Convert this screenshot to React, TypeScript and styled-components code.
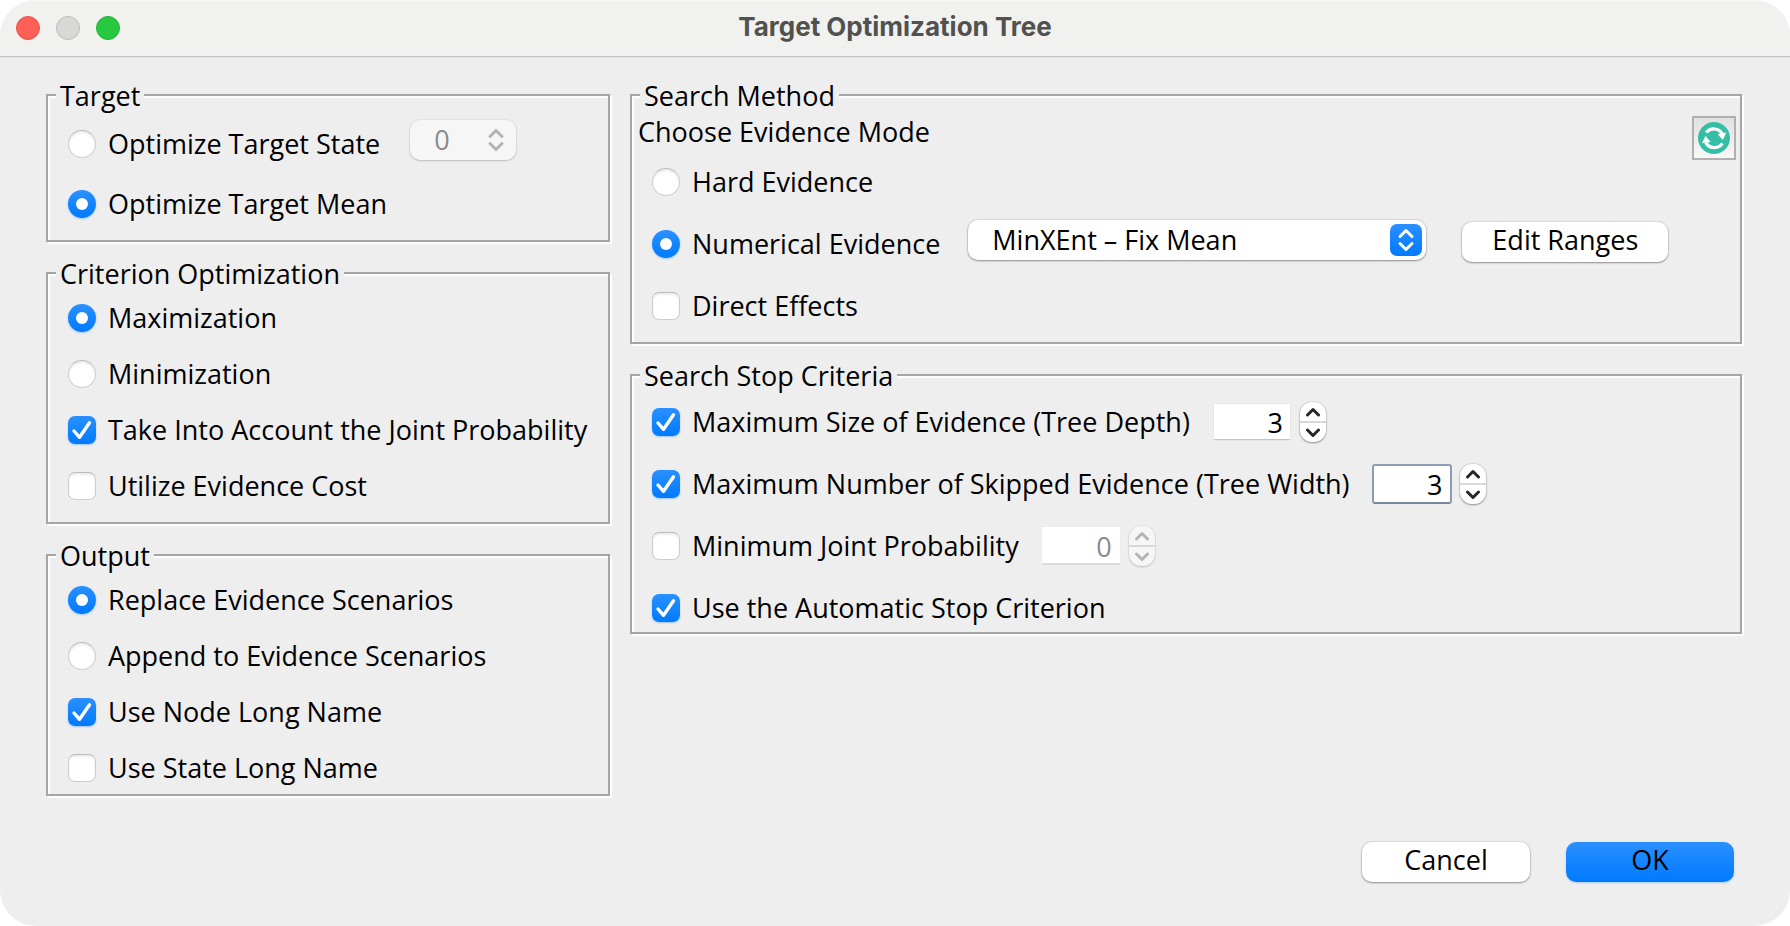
import React, { useState } from "react";
import styled, { createGlobalStyle, css } from "styled-components";

const colors = {
  panel: "#eeeeee",
  line: "#a5a5a5",
  accentTop: "#2a90ff",
  accentBottom: "#007aff",
  disabled: "#8a8a8a",
};

const GlobalStyle = createGlobalStyle`
  *, *::before, *::after { box-sizing: border-box; }
  body {
    margin: 0;
    background: #ffffff;
    color: #000000;
    font-family: "Open Sans", "Noto Sans", sans-serif;
    font-size: 27px;
    line-height: 32px;
  }
  button, input, select { font: inherit; color: inherit; margin: 0; }
`;

const accent = css`
  background: linear-gradient(${colors.accentTop}, ${colors.accentBottom});
`;

const raised = css`
  background: #ffffff;
  box-shadow: 0 0 1px 1px rgba(0, 0, 0, 0.08), 0 1px 2px rgba(0, 0, 0, 0.35);
`;

const Window = styled.div`
  display: flex;
  flex-direction: column;
  min-height: 100vh;
  overflow: hidden;
  border-radius: 36px;
  background: ${colors.panel};
`;

const TitleBar = styled.header`
  display: grid;
  grid-template-columns: 1fr auto 1fr;
  align-items: center;
  height: 58px;
  padding: 0 16px 2px;
  border-top: 1px solid #f7f7f6;
  border-bottom: 1px solid #dfdfdf;
  box-shadow: inset 0 -1px 0 #c6c6c6;
  background: #f1f1ef;
`;

const Title = styled.h1`
  margin: 0;
  padding-bottom: 2px;
  font-family: Inter, sans-serif;
  font-size: 26px;
  font-weight: 700;
  line-height: 32px;
  color: #51514f;
`;

const Lights = styled.div`
  display: flex;
  gap: 16px;
`;

const Light = styled.button<{ $fill: string; $edge: string }>`
  width: 24px;
  height: 24px;
  padding: 0;
  border: 1px solid ${(p) => p.$edge};
  border-radius: 50%;
  background: ${(p) => p.$fill};
`;

const Panels = styled.main`
  display: grid;
  grid-template-columns: 564px 1fr;
  align-items: start;
  column-gap: 20px;
  padding: 21px 48px 0 46px;
`;

const Column = styled.div`
  display: flex;
  flex-direction: column;
  gap: 15px;
  min-width: 0;
`;

const Group = styled.fieldset`
  min-width: 0;
  margin: 0;
  padding: 0;
  border: 2px solid ${colors.line};
  box-shadow: 2px 2px 0 #ffffff, inset 2px 2px 0 #ffffff;
`;

const GroupTitle = styled.legend`
  height: 32px;
  margin-left: 8px;
  padding: 2px 4px 0;
  line-height: 30px;
  background: ${colors.panel};
`;

const Options = styled.div<{ $gap: number; $top: number; $bottom: number }>`
  display: flex;
  flex-direction: column;
  align-items: flex-start;
  gap: ${(p) => p.$gap}px;
  padding: ${(p) => p.$top}px 20px ${(p) => p.$bottom}px;
`;

const OptionLabel = styled.label`
  display: flex;
  align-items: center;
  gap: 12px;
  height: 28px;
  white-space: nowrap;
`;

const Mark = styled.span`
  display: grid;
  width: 28px;
  height: 28px;

  & > * { grid-area: 1 / 1; }
  svg { display: none; pointer-events: none; }
  input:checked + svg { display: block; }
`;

const Toggle = styled.input`
  appearance: none;
  width: 28px;
  height: 28px;
  border: 1px solid #cdcdcd;
  border-top-color: #bcbcbc;
  border-radius: ${(p) => (p.type === "radio" ? "50%" : "7px")};
  background: #ffffff;
  box-shadow: inset 0 2px 2px rgba(0, 0, 0, 0.08);

  &:checked {
    ${accent}
    border: 0;
    box-shadow: 0 1px 2px rgba(0, 122, 255, 0.35);
  }
`;

const ControlRow = styled.div<{ $gap: number; $raise?: boolean }>`
  display: flex;
  align-items: ${(p) => (p.$raise ? "flex-end" : "center")};
  gap: ${(p) => p.$gap}px;
  height: 28px;
`;

const Controls = styled.div`
  display: flex;
  align-items: baseline;
  gap: 36px;
  height: 38px;
`;

const SelectBox = styled.span<{ $width: number }>`
  display: inline-grid;
  align-items: center;
  width: ${(p) => p.$width}px;
  height: 40px;

  & > * { grid-area: 1 / 1; }
`;

const Select = styled.select`
  appearance: none;
  width: 100%;
  height: 40px;
  padding: 0 40px 0 24px;
  border: 0;
  border-radius: 10px;
  ${raised}

  &:disabled {
    background: #f6f6f6;
    color: ${colors.disabled};
    opacity: 1;
    box-shadow: 0 0 1px 1px rgba(0, 0, 0, 0.04), 0 1px 2px rgba(0, 0, 0, 0.18);
  }
`;

const SelectArrows = styled.span<{ $active?: boolean }>`
  display: grid;
  place-items: center;
  justify-self: end;
  width: 32px;
  height: 32px;
  margin-right: 4px;
  border-radius: 7px;
  pointer-events: none;
  color: ${(p) => (p.$active ? "#ffffff" : "#b4b4b4")};
  ${(p) => p.$active && accent}
`;

const PushButton = styled.button<{ $width: number; $primary?: boolean }>`
  width: ${(p) => p.$width}px;
  height: 40px;
  padding: 0 0 4px;
  border: 0;
  border-radius: 10px;
  white-space: nowrap;
  ${raised}
  ${(p) =>
    p.$primary &&
    css`
      ${accent}
      box-shadow: 0 1px 2px rgba(0, 122, 255, 0.3);
    `}
`;

const MethodHead = styled.div`
  display: flex;
  align-items: flex-start;
  justify-content: space-between;
  padding: 5px 4px 0 6px;
`;

const Caption = styled.p`
  margin: 0;
`;

const RefreshButton = styled.button`
  display: grid;
  place-items: center;
  width: 44px;
  height: 44px;
  padding: 0;
  border: 2px solid #b0b0b0;
  background: linear-gradient(#e0e0e0, #f8f8f8);
`;

const SpinnerBox = styled.span`
  display: flex;
  align-items: center;
  gap: 8px;
`;

const SpinnerInput = styled.input<{ $focused?: boolean }>`
  width: 80px;
  height: 40px;
  padding: 0 8px 0 0;
  border: 1px solid ${colors.panel};
  background: #ffffff;
  background-clip: padding-box;
  text-align: right;
  outline: 0;
  box-shadow: inset 0 0 0 1px #e6e6e6, inset 0 -2px 0 #c4c4c4;
  ${(p) =>
    p.$focused &&
    css`
      border: 2px solid #8c9cb4;
      border-bottom-color: #76889e;
      border-radius: 3px;
      padding-right: 7px;
      box-shadow: none;
    `}

  &:disabled {
    color: ${colors.disabled};
    box-shadow: inset 0 -2px 0 #dcdcdc;
  }
`;

const Stepper = styled.span<{ $off?: boolean }>`
  display: flex;
  flex-direction: column;
  width: 26px;
  height: 40px;
  overflow: hidden;
  border-radius: 12px;
  color: #262626;
  ${raised}
  ${(p) =>
    p.$off &&
    css`
      color: #b4b4b4;
      background: #f6f6f6;
      box-shadow: 0 0 1px 1px rgba(0, 0, 0, 0.04), 0 1px 2px rgba(0, 0, 0, 0.18);
    `}
`;

const StepButton = styled.button`
  display: grid;
  place-items: center;
  flex: 1;
  padding: 0;
  border: 0;
  background: transparent;

  & + & { border-top: 2px solid #d8d8d8; }
`;

const Footer = styled.footer`
  display: flex;
  justify-content: flex-end;
  gap: 36px;
  margin-top: auto;
  padding: 24px 56px 44px;
`;

const RadioDot = () => (
  <svg width="28" height="28" viewBox="0 0 28 28" aria-hidden="true">
    <circle cx="14" cy="14" r="6" fill="#ffffff" />
  </svg>
);

const CheckMark = () => (
  <svg width="28" height="28" viewBox="0 0 28 28" aria-hidden="true">
    <path d="M6 15 L11.5 21.3 L21.5 6.8" fill="none" stroke="#ffffff" strokeWidth="3.4" strokeLinecap="round" strokeLinejoin="round" />
  </svg>
);

const UpDown = () => (
  <svg width="20" height="28" viewBox="0 0 20 28" fill="none" stroke="currentColor" strokeWidth="3" strokeLinecap="round" strokeLinejoin="round" aria-hidden="true">
    <path d="M4 10.5 L10 4.5 L16 10.5 M4 17.5 L10 23.5 L16 17.5" />
  </svg>
);

const Chevron = ({ down }: { down?: boolean }) => (
  <svg width="16" height="10" viewBox="0 0 16 10" fill="none" stroke="currentColor" strokeWidth="3" strokeLinecap="round" strokeLinejoin="round" aria-hidden="true">
    <path d={down ? "M2.5 2 L8 7.5 L13.5 2" : "M2.5 8 L8 2.5 L13.5 8"} />
  </svg>
);

const RefreshIcon = () => (
  <svg width="32" height="32" viewBox="0 0 32 32" aria-hidden="true">
    <circle cx="16" cy="16" r="16" fill="#35bea6" />
    <path d="M8.2 10.6 A9.8 9.8 0 0 1 24.4 12 M24.4 21.4 A9.8 9.8 0 0 1 7.8 20.6" fill="none" stroke="#ffffff" strokeWidth="3.2" />
    <path d="M28.4 10.6 L24.8 18 L19.6 12 Z M4 21.2 L7.6 13.8 L12.6 20 Z" fill="#ffffff" />
  </svg>
);

type OptionProps = {
  kind: "radio" | "checkbox";
  label: string;
  name?: string;
  checked?: boolean;
};

const Option = ({ kind, label, name, checked }: OptionProps) => (
  <OptionLabel>
    <Mark>
      <Toggle type={kind} name={name} defaultChecked={checked} />
      {kind === "radio" ? <RadioDot /> : <CheckMark />}
    </Mark>
    {label}
  </OptionLabel>
);

type SpinnerProps = { label: string; initial: number; disabled?: boolean; focused?: boolean };

const Spinner = ({ label, initial, disabled, focused }: SpinnerProps) => {
  const [value, setValue] = useState(initial);
  return (
    <SpinnerBox>
      <SpinnerInput
        type="text"
        inputMode="numeric"
        aria-label={label}
        value={value}
        disabled={disabled}
        $focused={focused}
        onChange={(e) => setValue(Number(e.target.value) || 0)}
      />
      <Stepper $off={disabled}>
        <StepButton type="button" aria-label="Increase" disabled={disabled} onClick={() => setValue(value + 1)}>
          <Chevron />
        </StepButton>
        <StepButton type="button" aria-label="Decrease" disabled={disabled} onClick={() => setValue(value - 1)}>
          <Chevron down />
        </StepButton>
      </Stepper>
    </SpinnerBox>
  );
};

export default function App() {
  return (
    <>
      <GlobalStyle />
      <Window>
        <TitleBar>
          <Lights>
            <Light type="button" aria-label="Close" $fill="#ff5f57" $edge="#e9514a" />
            <Light type="button" aria-label="Minimize" $fill="#d8d8d7" $edge="#bdbdbc" />
            <Light type="button" aria-label="Zoom" $fill="#28c940" $edge="#23b238" />
          </Lights>
          <Title>Target Optimization Tree</Title>
        </TitleBar>

        <Panels>
          <Column>
            <Group>
              <GroupTitle>Target</GroupTitle>
              <Options $gap={32} $top={19} $bottom={22}>
                <ControlRow $gap={30} $raise>
                  <Option kind="radio" name="target" label="Optimize Target State" />
                  <Controls>
                    <SelectBox $width={106}>
                      <Select aria-label="Target state" disabled defaultValue="0">
                        <option value="0">0</option>
                      </Select>
                      <SelectArrows>
                        <UpDown />
                      </SelectArrows>
                    </SelectBox>
                  </Controls>
                </ControlRow>
                <Option kind="radio" name="target" label="Optimize Target Mean" checked />
              </Options>
            </Group>

            <Group>
              <GroupTitle>Criterion Optimization</GroupTitle>
              <Options $gap={28} $top={15} $bottom={22}>
                <Option kind="radio" name="criterion" label="Maximization" checked />
                <Option kind="radio" name="criterion" label="Minimization" />
                <Option kind="checkbox" label="Take Into Account the Joint Probability" checked />
                <Option kind="checkbox" label="Utilize Evidence Cost" />
              </Options>
            </Group>

            <Group>
              <GroupTitle>Output</GroupTitle>
              <Options $gap={28} $top={15} $bottom={12}>
                <Option kind="radio" name="output" label="Replace Evidence Scenarios" checked />
                <Option kind="radio" name="output" label="Append to Evidence Scenarios" />
                <Option kind="checkbox" label="Use Node Long Name" checked />
                <Option kind="checkbox" label="Use State Long Name" />
              </Options>
            </Group>
          </Column>

          <Column>
            <Group>
              <GroupTitle>Search Method</GroupTitle>
              <MethodHead>
                <Caption>Choose Evidence Mode</Caption>
                <RefreshButton type="button" aria-label="Refresh">
                  <RefreshIcon />
                </RefreshButton>
              </MethodHead>
              <Options $gap={34} $top={8} $bottom={22}>
                <Option kind="radio" name="evidence" label="Hard Evidence" />
                <ControlRow $gap={28} $raise>
                  <Option kind="radio" name="evidence" label="Numerical Evidence" checked />
                  <Controls>
                    <SelectBox $width={458}>
                      <Select aria-label="Numerical evidence method" defaultValue="mean">
                        <option value="mean">MinXEnt – Fix Mean</option>
                      </Select>
                      <SelectArrows $active>
                        <UpDown />
                      </SelectArrows>
                    </SelectBox>
                    <PushButton type="button" $width={206}>
                      Edit Ranges
                    </PushButton>
                  </Controls>
                </ControlRow>
                <Option kind="checkbox" label="Direct Effects" />
              </Options>
            </Group>

            <Group>
              <GroupTitle>Search Stop Criteria</GroupTitle>
              <Options $gap={34} $top={17} $bottom={10}>
                <ControlRow $gap={22}>
                  <Option kind="checkbox" label="Maximum Size of Evidence (Tree Depth)" checked />
                  <Spinner label="Maximum size of evidence" initial={3} />
                </ControlRow>
                <ControlRow $gap={22}>
                  <Option kind="checkbox" label="Maximum Number of Skipped Evidence (Tree Width)" checked />
                  <Spinner label="Maximum number of skipped evidence" initial={3} focused />
                </ControlRow>
                <ControlRow $gap={22}>
                  <Option kind="checkbox" label="Minimum Joint Probability" />
                  <Spinner label="Minimum joint probability" initial={0} disabled />
                </ControlRow>
                <Option kind="checkbox" label="Use the Automatic Stop Criterion" checked />
              </Options>
            </Group>
          </Column>
        </Panels>

        <Footer>
          <PushButton type="button" $width={168}>
            Cancel
          </PushButton>
          <PushButton type="button" $width={168} $primary>
            OK
          </PushButton>
        </Footer>
      </Window>
    </>
  );
}
